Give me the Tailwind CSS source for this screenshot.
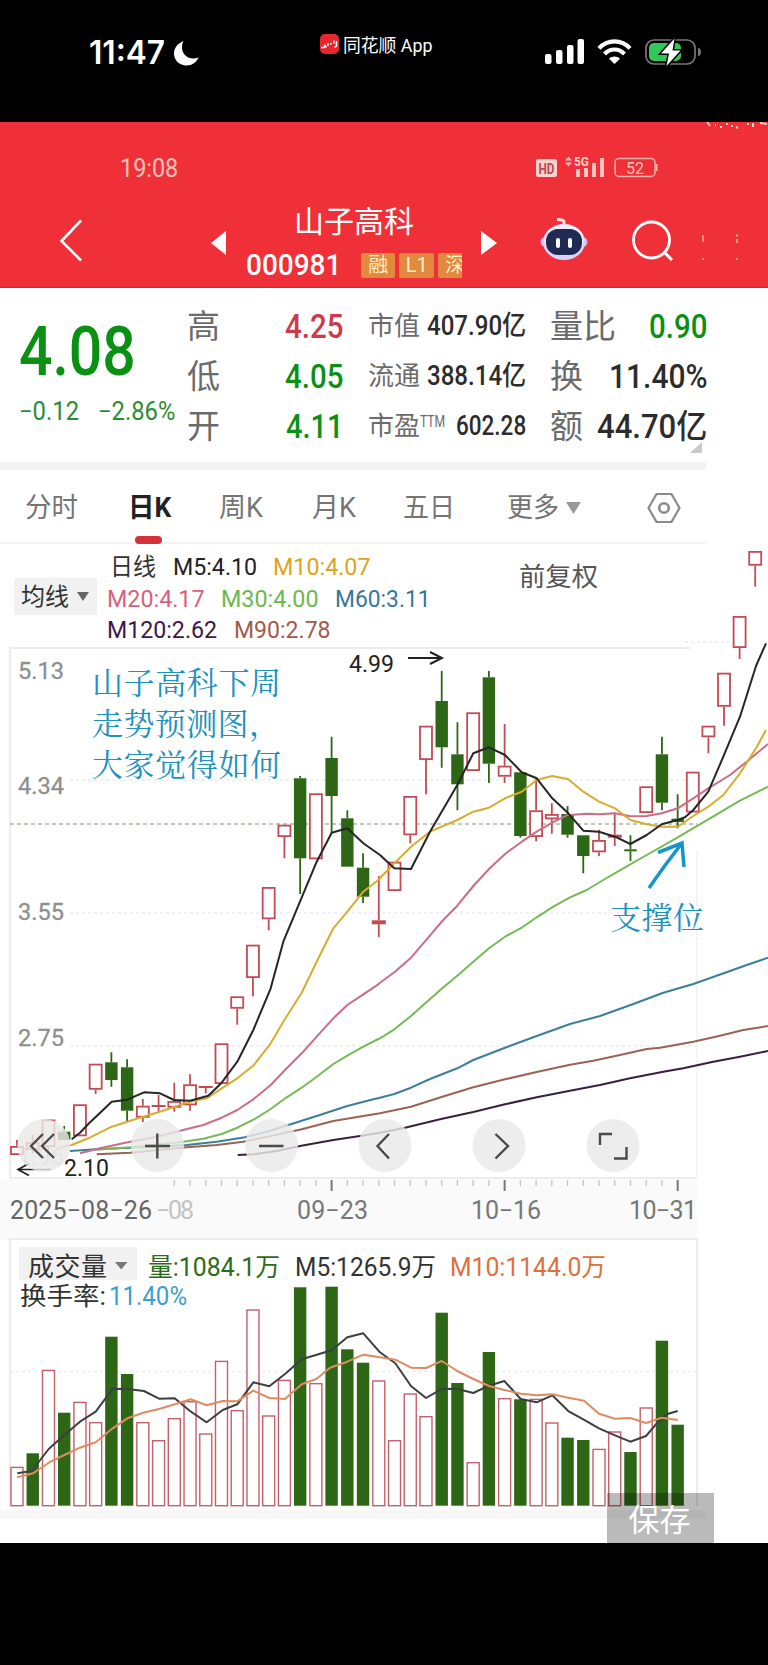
<!DOCTYPE html>
<html lang="zh-CN">
<head>
<meta charset="utf-8">
<title>山子高科 000981</title>
<script src="https://cdn.jsdelivr.net/npm/@tailwindcss/browser@4"></script>
</head>
<body class="w-[768px] h-[1665px] overflow-hidden bg-black font-[Roboto,'Noto_Sans_CJK_SC',sans-serif]">

<!-- phone status bar -->
<header class="h-[122px] flex items-start text-white">
  <div class="flex items-center h-[26px] mt-[40px] ml-[89px] w-[231px]">
    <span data-w="76" class="font-[Inter] font-semibold text-[32px] leading-none whitespace-nowrap">11:47</span>
    <svg class="ml-[9px]" width="25" height="26" viewBox="0 0 25 26"><path fill="#fff" d="M9.5 1C3.8 3.400 0 8 0 13.500 0 20.500 5.600 25.500 12.500 25.500c5.500 0 10-3.200 12-8-1.600.7-3.300 1-5 1C12.800 18.500 8 13.700 8 7.500 8 5 8.500 3 9.500 1z"/></svg>
  </div>
  <div class="flex items-center h-[22px] mt-[33px] w-[225px]">
    <svg width="19" height="20" viewBox="0 0 19 20"><rect width="19" height="20" rx="5" fill="#e8272d"/><path d="M1 13.500h3l1-2 1.500 2M8 9v3M10 10.500l2-1.500M14 6.500v3M16.500 7v5l-2 1.500" stroke="#fff" stroke-width="1.500" fill="none"/></svg>
    <span data-w="89" class="ml-[4px] mt-[3px] text-[18px] leading-none whitespace-nowrap">同花顺 App</span>
  </div>
  <svg class="mt-[36px]" width="160" height="32" viewBox="545 36 160 32">
    <g fill="#fff"><rect x="545" y="54" width="6.500" height="10" rx="2"/><rect x="556" y="50" width="6.500" height="14" rx="2"/><rect x="567" y="45" width="6.500" height="19" rx="2"/><rect x="577.500" y="39" width="6.500" height="25" rx="2"/>
    <path d="M614.500 64l-5.500-5.300c3-2.900 8-2.900 11 0z"/></g>
    <g fill="none" stroke="#fff" stroke-width="4.200"><path d="M599 48.300c8.500-9.300 22.500-9.300 31 0"/><path d="M604.500 54c5.500-6 14.500-6 20 0"/></g>
    <rect x="646" y="40" width="49" height="24" rx="8" fill="none" stroke="#777" stroke-width="1.700"/>
    <path d="M698 47.500q3 1 3 4.500t-3 4.500z" fill="#777"/>
    <rect x="649" y="43" width="32" height="18" rx="5" fill="#33c759"/>
    <path d="M674.500 38.500l-13.500 15h8l-2.500 12.500 14-15.500h-8z" fill="#fff" stroke="#000" stroke-width="3" paint-order="stroke"/>
  </svg>
</header>

<main class="relative w-[768px] h-[1421px] bg-white">
  <!-- red title area -->
  <section class="h-[166px] bg-[#f03038] border-b border-[#b8343a] relative">
    <div class="flex items-start h-[60px] pl-[120px] text-[#ffc3bd]">
      <span data-w="58" class="text-[25px] leading-none mt-[34px]">19:08</span>
      <svg class="ml-[358px] mt-[33px]" width="124" height="24" viewBox="536 155 124 24">
        <rect x="536" y="159" width="21" height="18" rx="2" fill="#ffd3cb"/>
        <text x="538.500" y="174" font-size="15" font-weight="700" textLength="16" lengthAdjust="spacingAndGlyphs" fill="#b84a50">HD</text>
        <path d="M565 160.500l3.500-4 3.500 4zM565 162.500l3.500 4 3.500-4z" fill="#ffc3bd"/>
        <text x="574" y="166" font-size="13" font-weight="700" textLength="15" lengthAdjust="spacingAndGlyphs" fill="#ffd3cb">5G</text>
        <path d="M576 169h4v8h-4zM584 168h4v9h-4zM592 163h4v14h-4zM600 158h4v19h-4z" fill="#ffc3bd"/>
        <rect x="615" y="158.500" width="40" height="18" rx="4" fill="none" stroke="#ffb0a8" stroke-width="1.500"/><path d="M656.500 164v7" stroke="#ffb0a8" stroke-width="2"/>
        <text x="626" y="173.500" font-size="16" textLength="18" fill="#ffc3bd">52</text>
      </svg>
    </div>
    <div class="flex mt-[16px] h-[80px]">
      <svg class="ml-[58px] mt-[20px]" width="28" height="46" viewBox="58 217 28 46"><path d="M81 219.500L61.500 240 81 259.500" fill="none" stroke="#fff" stroke-width="2.600"/></svg>
      <svg class="ml-[125px] mt-[33px]" width="15" height="24" viewBox="0 0 15 24"><path d="M15 0v24L0 12z" fill="#fff"/></svg>
      <div class="ml-[20px] w-[235px] text-white">
        <div class="h-[42px] pt-[9px] pl-[48px] leading-none text-[30px] whitespace-nowrap flex"><span data-w="120">山子高科</span></div>
        <div class="flex items-center h-[32px] mt-[9px]">
          <span data-w="95" class="text-[30px] leading-none font-medium">000981</span>
          <div class="ml-[20px] w-[101px] shrink-0 overflow-hidden flex gap-[4px] text-[20px] leading-[25px] text-[#fff0c8] text-center">
            <span class="w-[34px] h-[25px] bg-[#e2893f] shrink-0 rounded-xs">融</span>
            <span class="w-[35px] h-[25px] bg-[#e2893f] shrink-0 rounded-xs">L1</span>
            <span class="w-[34px] h-[25px] bg-[#e2893f] shrink-0 rounded-xs">深</span>
          </div>
        </div>
      </div>
      <svg class="mt-[33px]" width="16" height="24" viewBox="0 0 16 24"><path d="M0 0v24l16-12z" fill="#fff"/></svg>
      <svg class="ml-[41px] mt-[17px]" width="52" height="46" viewBox="538 215 52 46">
        <path d="M564 226v-4.500q0-2-7-2" stroke="#ffe0e0" stroke-width="3" fill="none"/>
        <circle cx="545.500" cy="242" r="5" fill="#c8c0f4"/><circle cx="582.500" cy="242" r="5" fill="#c8c0f4"/>
        <ellipse cx="564" cy="242" rx="21" ry="18" fill="#d9d2fa"/><ellipse cx="564" cy="240" rx="19.500" ry="15.500" fill="#f2effd"/>
        <rect x="546" y="229" width="36" height="26" rx="12" fill="#1f2b52"/><rect x="556" y="238" width="4" height="10" rx="2" fill="#fff"/><rect x="568" y="238" width="4" height="10" rx="2" fill="#fff"/>
      </svg>
      <svg class="ml-[40px] mt-[20px]" width="48" height="46" viewBox="630 218 48 46"><circle cx="651.500" cy="240" r="18" fill="none" stroke="#fff" stroke-width="2.800"/><path d="M664 252l8 8" stroke="#fff" stroke-width="3"/></svg>
      <svg class="ml-[22px] mt-[34px]" width="44" height="30" viewBox="700 232 44 30"><path d="M703 235v7M737 234v3M737 239v4M703 258v2M737 258v2" stroke="#ff9a95" stroke-width="1.800"/></svg>
    </div>
    <svg class="absolute right-0 top-0" width="62" height="8" viewBox="706 122 62 8"><path d="M707 122l3 4M715 125h1M720 127h2M726 124h2M731 126h2M736 127l2 1M747 124h2M753 123v4M760 123l7 1" stroke="#ffd5d0" stroke-width="2" fill="none"/></svg>
  </section>

  <!-- quote summary -->
  <section class="flex h-[174px] text-[#6b6b6b] whitespace-nowrap">
    <div class="ml-[19px] w-[168px]">
      <div class="h-[104px] pt-[30px] text-[#0a9012] text-[68px] leading-none font-medium flex"><span data-w="117">4.08</span></div>
      <div class="flex text-[25px] leading-none text-[#2b8c34] mt-[7px]"><span data-w="60">−0.12</span><span data-w="77" class="ml-[19px]">−2.86%</span></div>
    </div>
    <div class="w-[156px] pt-[13px] text-[33px]">
      <div class="h-[50px] flex items-center justify-between leading-none"><span>高</span><span data-w="58" class="text-[#cc3a4c] font-medium">4.25</span></div>
      <div class="h-[50px] flex items-center justify-between leading-none"><span>低</span><span data-w="58" class="text-[#0a9012] font-medium">4.05</span></div>
      <div class="h-[50px] flex items-center justify-between leading-none"><span>开</span><span data-w="57" class="text-[#0a9012] font-medium">4.11</span></div>
    </div>
    <div class="ml-[25px] w-[158px] pt-[13px] text-[26px]">
      <div class="h-[50px] flex items-center justify-between leading-none"><span>市值</span><span data-w="99" class="text-[#2c2c2c] text-[27px] font-medium">407.90亿</span></div>
      <div class="h-[50px] flex items-center justify-between leading-none"><span>流通</span><span data-w="99" class="text-[#2c2c2c] text-[27px] font-medium">388.14亿</span></div>
      <div class="h-[50px] flex items-center justify-between leading-none"><span class="flex items-start">市盈<span data-w="25" class="text-[17px] leading-none">TTM</span></span><span data-w="70" class="text-[#2c2c2c] text-[27px] font-medium">602.28</span></div>
    </div>
    <div class="ml-[24px] w-[157px] pt-[13px] text-[33px]">
      <div class="h-[50px] flex items-center justify-between leading-none"><span>量比</span><span data-w="58" class="text-[#0a9012] font-medium">0.90</span></div>
      <div class="h-[50px] flex items-center justify-between leading-none"><span>换</span><span data-w="99" class="text-[#2c2c2c] font-medium">11.40%</span></div>
      <div class="h-[50px] flex items-center justify-between leading-none"><span>额</span><span data-w="110" class="text-[#2c2c2c] font-medium">44.70亿</span></div>
      <svg class="ml-[140px] -mt-[9px]" width="12" height="11"><path d="M12 0v11H0z" fill="#c9c9c9"/></svg>
    </div>
  </section>
  <div class="w-[706px] h-[8px] bg-[#f3f3f3]"></div>

  <!-- period tabs -->
  <nav class="w-[706px] h-[74px] border-b-2 border-[#f3f3f3] flex text-[27px] leading-[76px] text-[#757575] whitespace-nowrap">
    <span class="ml-[25px] w-[103px] flex"><span data-w="53">分时</span></span>
    <span class="w-[91px] flex relative text-[#222] font-bold"><span data-w="43">日K</span><i class="absolute left-[7px] top-[66px] w-[27px] h-[8px] rounded-full bg-[#d2323c]"></i></span>
    <span class="w-[93px] flex"><span data-w="44">周K</span></span>
    <span class="w-[91px] flex"><span data-w="44">月K</span></span>
    <span class="w-[104px] flex"><span data-w="52">五日</span></span>
    <span class="w-[59px] flex"><span data-w="52">更多</span></span>
    <svg class="mt-[32px]" width="15" height="12"><path d="M0 0h15L7.500 12z" fill="#999"/></svg>
    <svg class="ml-[66px] mt-[22px]" width="34" height="32" viewBox="647 492 34 32"><path d="M656.500 494h15l8 14-8 14h-15l-8-14z" fill="none" stroke="#8a8a8a" stroke-width="2.200" stroke-linejoin="round"/><circle cx="664" cy="508" r="4.800" fill="none" stroke="#8a8a8a" stroke-width="2.600"/></svg>
  </nav>

  <!-- moving-average legend -->
  <section class="flex h-[104px] whitespace-nowrap text-[24px] leading-none">
    <div class="ml-[14px] mt-[34px] w-[83px] h-[37px] bg-[#f1f1f1] rounded-xs flex items-center text-[#333]"><span class="ml-[7px]" data-w="48">均线</span><svg class="ml-[8px]" width="12" height="9"><path d="M0 0h12L6 9z" fill="#666"/></svg></div>
    <div class="ml-[10px] w-[412px] pt-[7px]">
      <div class="flex items-center h-[32px] pl-[3px]"><span data-w="46" class="text-[#333]">日线</span><span data-w="84" class="ml-[17px] text-[#222]">M5:4.10</span><span data-w="98" class="ml-[16px] text-[#dba520]">M10:4.07</span></div>
      <div class="flex items-center h-[31px]"><span data-w="98" class="text-[#d9607c]">M20:4.17</span><span data-w="98" class="ml-[16px] text-[#6cb84c]">M30:4.00</span><span data-w="96" class="ml-[17px] text-[#377898]">M60:3.11</span></div>
      <div class="flex items-center h-[32px]"><span data-w="110" class="text-[#3c1650]">M120:2.62</span><span data-w="97" class="ml-[17px] text-[#a25a4c]">M90:2.78</span></div>
    </div>
    <span class="text-[26px] mt-[20px] text-[#555]" data-w="79">前复权</span>
  </section>

  <!-- price and volume charts; user units are page pixels -->
  <svg id="chart" class="absolute left-0 top-[421px]" width="768" height="1000" viewBox="0 543 768 1000">
    <rect x="0" y="1180" width="697" height="60" fill="#fafafa"/>
    <g fill="none" stroke="#ececec" stroke-width="2"><path d="M690 648H10V1178H697"/><path d="M697 850V1178" stroke="#f5f5f5"/><path d="M10 1506V1239H697V1506"/></g>
    <rect x="0" y="1510" width="706" height="9" fill="#f7f7f7"/>
    <g fill="none" stroke="#ececec" stroke-width="1.300" stroke-dasharray="3 3"><path d="M70 780H697M70 913H697M70 1046H697M685 642H745M10 1371.500H697"/></g>
    <path d="M10 824H697" stroke="#a9bba4" stroke-width="1.500" stroke-dasharray="4 3"/>
    <g id="ticks"></g>
    <g font-size="24" fill="#8f8f8f" stroke="#8f8f8f" stroke-width=".3">
      <text x="18" y="679" textLength="46" lengthAdjust="spacingAndGlyphs">5.13</text>
      <text x="18" y="793.500" textLength="46" lengthAdjust="spacingAndGlyphs">4.34</text>
      <text x="18" y="920" textLength="46" lengthAdjust="spacingAndGlyphs">3.55</text>
      <text x="18" y="1046" textLength="46" lengthAdjust="spacingAndGlyphs">2.75</text>
      <text x="18" y="1165" textLength="46" lengthAdjust="spacingAndGlyphs" fill="#ccc" stroke="none">1.96</text>
    </g>
    <g font-size="25" fill="#777">
      <text x="10" y="1218.500" textLength="142" fill="#666">2025−08−26</text><text x="156" y="1218.500" textLength="38" fill="#c4c4c4">−08</text>
      <text x="297" y="1218.500" textLength="71">09−23</text><text x="471" y="1218.500" textLength="70">10−16</text><text x="629" y="1218.500" textLength="68">10−31</text>
    </g>
    <g id="candles"></g><g id="lines" fill="none" stroke-width="2" stroke-linejoin="round"></g>
    <g font-size="31" fill="#1c93bd" font-family="'Noto Serif CJK SC','Noto Sans CJK SC',sans-serif">
      <text x="92" y="694" textLength="189">山子高科下周</text><text x="92" y="735" textLength="188">走势预测图，</text><text x="92" y="775.500" textLength="189">大家觉得如何</text>
      <text x="610" y="929" textLength="94">支撑位</text>
    </g>
    <path d="M649 888Q664 866 682 843M658 852.500L682 843L684 867" fill="none" stroke="#1496cc" stroke-width="3.500"/>
    <g font-size="23.500" fill="#222"><text x="349" y="671.500" textLength="45" lengthAdjust="spacingAndGlyphs">4.99</text><text x="64" y="1176" textLength="45" lengthAdjust="spacingAndGlyphs">2.10</text></g>
    <g fill="none" stroke="#222" stroke-width="2"><path d="M408 658H441M430 652L442 658L430 664"/><path d="M51 1169.500H18M29 1163.500L18 1169.500L29 1175.500" stroke-width="1.700"/></g>
    <g fill="#e9e9e9" fill-opacity=".82"><circle cx="44" cy="1145.500" r="26.500"/><circle cx="157.500" cy="1145.500" r="26.500"/><circle cx="271.500" cy="1145.500" r="26.500"/><circle cx="385" cy="1145.500" r="26.500"/><circle cx="499" cy="1145.500" r="26.500"/><circle cx="613" cy="1145.500" r="26.500"/></g>
    <g fill="none" stroke="#4a4a4a" stroke-width="2.400"><path d="M43 1134L31 1146L43 1158M54 1134L42 1146L54 1158"/><path d="M145 1146H170M157.300 1133.500V1158.500M259 1146H283.500"/><path d="M389 1134L377.500 1146L389 1158.500"/><path d="M495.500 1134L508 1146L495.500 1158.500"/><path d="M600 1145V1134H612M626.500 1147V1158.500H614"/></g>
    <rect x="19" y="1247" width="118" height="33" fill="#f1f1f1"/><path d="M115 1262H127.500L121.200 1269.500z" fill="#777"/>
    <g font-size="25">
      <text x="28" y="1276" textLength="79" font-size="26" fill="#333">成交量</text>
      <text x="148" y="1275.500" textLength="132" lengthAdjust="spacingAndGlyphs" fill="#2d6b18">量:1084.1万</text>
      <text x="295" y="1275.500" textLength="141" lengthAdjust="spacingAndGlyphs" fill="#333">M5:1265.9万</text>
      <text x="450" y="1275.500" textLength="156" lengthAdjust="spacingAndGlyphs" fill="#e0703e">M10:1144.0万</text>
      <text x="20" y="1304.500" textLength="86" lengthAdjust="spacingAndGlyphs" fill="#333">换手率:</text>
      <text x="109" y="1304.500" textLength="78" lengthAdjust="spacingAndGlyphs" fill="#3a9fcc">11.40%</text>
    </g>
  </svg>
  <button class="absolute left-[607px] top-[1371px] w-[107px] h-[53px] bg-black/27 text-white text-[31px] leading-[56px] text-center pr-[2px]">保存</button>
</main>

<script>
// Squeeze or stretch each label to its column width, again whenever its natural size changes.
const fit = e => {
  const n = e.offsetWidth, w = +e.dataset.w;
  if (!n) return;
  e.style.transform = `scaleX(${w / n})`;
  e.style.marginRight = (w - n) + 'px';
};
const labels = [...document.querySelectorAll('[data-w]')];
const watcher = new ResizeObserver(list => list.forEach(x => fit(x.target)));
labels.forEach(e => {
  Object.assign(e.style, { display: 'inline-block', flexShrink: 0, whiteSpace: 'nowrap', transformOrigin: '0 50%' });
  watcher.observe(e);
});
window.addEventListener('load', () => labels.forEach(fit));
const cx = i => 17 + 15.73 * i;
const G = '#2d6614', R = '#c44a54';
// [kind, high, body top, body bottom, low]
const K = [['r',1140,1146,1155,1155],['r',1135,1142,1150,1153],['r',1119,1119.500,1147,1150],['g',1126,1131.700,1140,1140],['r',1104,1104.300,1136.300,1136],['r',1064,1063.700,1089.700,1094],['g',1052.300,1062.300,1080,1086.700],['g',1059.300,1067.300,1110.700,1121.700],['r',1099,1105.700,1117.700,1122],['r',1095,1105,1106.300,1111.700],['r',1082.700,1101,1107.700,1111.700],['r',1074.300,1084.300,1105.300,1110.700],['r',1086,1086,1087.300,1093.300],['r',1044,1043.300,1084,1084],['r',997,996.300,1008.700,1024.700],['r',945,944.700,978,996.300],['r',887,887,919.300,930.300],['r',825,824.700,837,858.300],['g',776,778.300,858.300,894],['r',794,793.300,859.300,859],['g',736.700,758,796,832.700],['g',810.300,818.300,866.700,866.700],['g',853.300,867.700,896.700,903],['r',876,920.300,924.300,937.300],['r',862,861.700,891,891],['r',796,796,835.300,843.300],['r',726,725.700,760,794.300],['g',671,701,747.300,767.700],['g',722.300,754.300,784.300,810.300],['r',713,712.300,771,771],['g',671,677.300,763.700,783],['r',724,765.700,776.700,783],['g',772.300,772.300,836,837.700],['r',777.300,810.300,837,841.300],['r',803.300,814,819.300,833.700],['g',806,814,834.700,837.700],['g',835.300,835.300,856,873.300],['r',829.700,840,852.300,856],['r',812.700,834.700,837.700,846],['g',835.300,849.300,851.300,861],['r',787,786.300,813,813],['g',736.700,754.300,802.700,810.300],['g',794.300,818.700,822,828.300],['r',772,771.700,812.500,812],['r',726,725.700,737.300,753.300],['r',673,672.700,706.700,725.700],['r',616,616,648,659],['r',551,551,565.700,586.700]];
let s = '';
K.forEach(([k, h, t, b, l], i) => {
  const x = i > 42 ? 677.200 + 15.600 * (i - 42) : cx(i), c = k == 'g' ? G : R;
  s += `<path d="M${x} ${h}V${Math.max(h, t)}M${x} ${b}V${Math.max(b, l)}" stroke="${c}" stroke-width="1.8"/>`;
  s += k == 'g' ? `<rect x="${x-6.2}" y="${t}" width="12.4" height="${b-t}" fill="${G}"/>`
     : b - t < 5 ? `<rect x="${x-7}" y="${t}" width="14" height="${Math.max(2, b-t)}" fill="${c}"/>`
     : `<rect x="${x-6}" y="${t+.9}" width="12" height="${b-t-1.8}" fill="#fff" stroke="${c}" stroke-width="1.8"/>`;
});
const V = 'r1466.7 g1453.3 r1369.7 g1412.7 r1401.7 r1422 g1336.7 g1374 r1422 r1440 r1418 r1401 r1433.3 r1360.7 r1410 r1309.3 r1415.3 r1379.7 g1287.3 r1383 g1286.7 g1349.3 g1362.7 r1380.3 r1440 r1393.3 r1416 g1312.7 g1383 r1462 g1352 r1398 g1399.3 r1398.7 r1422.3 g1437.7 g1440 r1448.7 r1431.3 g1452 r1407.3 g1340.7 g1424.7';
V.split(' ').forEach((v, i) => {
  const x = cx(i), t = +v.slice(1), h = 1505.700 - t;
  s += v[0] == 'g' ? `<rect x="${x-6.2}" y="${t}" width="12.4" height="${h}" fill="${G}"/>`
     : `<rect x="${x-6}" y="${t+.7}" width="12" height="${h-.7}" fill="#fff" stroke="#c4606a" stroke-width="1.4"/>`;
});
document.getElementById('candles').innerHTML = s;
s = '';
for (let i = 10; i < 43; i++) {
  const m = i == 20 || i == 31 || i == 42;
  s += `<path d="M${cx(i)} 1180V${m ? 1191 : 1186}" stroke="${m ? '#777' : '#c4c4c4'}" stroke-width="${m ? 2 : 1.3}"/>`;
}
document.getElementById('ticks').innerHTML = s;
// Each line is a list of segments: origin x, origin y, then points in thirds of a pixel.
const L = [
 ['#382040', [0,860,'713,885 760,883 830,873 900,858 1000,840 1080,828'],[380,860,'0,818 75,803 180,778 280,756 375,733 470,712 570,692 660,675 750,655 850,635 910,625 1000,605 1080,590 1164,573']],
 ['#9a6455', [0,860,'290,883 390,878 560,862 650,855 730,845 812,828 905,808 1000,783 1090,768'],[380,860,'0,760 93,740 187,710 280,682 375,658 470,636 570,614 640,602 720,585 800,567 840,563 940,545 1020,527 1090,510 1164,498']],
 ['#3c7f9b', [0,860,'210,873 300,867 470,860 560,855 650,845 735,832 800,815 865,795 950,768 1042,738 1120,718'],[380,860,'0,713 43,702 93,683 150,657 232,625 280,600 375,563 470,528 570,492 660,468 760,432 850,398 940,372 1050,333 1100,315 1164,293']],
 ['#76b957', [0,860,'290,869 390,862 550,845 610,836 665,822 712,803 762,778 812,747 860,712 905,683 950,650 1000,612 1042,587 1090,560 1135,537'],[380,860,'0,535 43,508 93,468 140,426 187,385 232,347 280,305 327,265 375,230 425,203 470,172 520,140 570,112 620,90 670,60 730,25'],[380,540,'800,945 893,892 985,838 1080,782 1164,740']],
 ['#cb6d87', [0,860,'240,880 300,865 390,845 470,830 540,812 610,795 665,773 712,750 760,718 812,675 860,625 905,580 950,530 1000,475 1042,435 1090,403 1135,373'],[380,860,'0,368 43,337 93,293 140,238 187,183 232,137 280,78'],[380,540,'327,987 375,942 425,905 470,875 517,848 560,826 620,821 657,823 705,820 751,829 800,828 845,820 893,805 940,775 985,745 1050,705 1100,665 1164,612']],
 ['#d8ac30', [0,860,'180,862 215,855 265,835 335,800 382,785 430,770 475,757 520,742 570,725 620,715 665,685 712,655 762,615 812,550 850,485 905,398 950,305 1000,205 1042,155 1090,95 1135,60'],[380,540,'43,970 93,920 150,875 232,840 280,815 327,803 375,775 425,755 470,720 517,708 565,718 610,755 657,785 705,805 751,840 800,853 845,860 893,860 940,828 985,800 1030,765 1080,700 1128,625 1158,570']],
 ['#262626', [0,860,'215,838 240,818 265,792 335,725 382,719 432,697 480,700 522,720 570,722 625,707 665,668 712,605 760,510 812,385 850,245 900,125 950,5'],[0,540,'995,878 1042,865 1090,910'],[380,540,'0,945 43,985 93,987 150,875 232,735 280,640 327,622 375,645 425,697 470,715 517,775 565,820 610,872 657,875 705,890 751,912 800,885 845,853 893,840 915,832 940,810 985,755 1030,650 1080,530 1128,378 1158,310']],
 ['#3c3f42', [0,1225,'52,745 95,738 146,672 193,630 240,590 287,560 338,491 382,492 432,498 477,521 524,520 570,558 620,592 668,555 712,538 760,472 808,484 855,447 905,403 950,389 995,376 1042,337 1090,325'],[380,1225,'0,382 46,415 93,483 138,519 187,491 232,492 280,504 327,482 373,468 422,522 470,532 517,511 565,558 610,583 657,610 705,631 751,650 798,633 835,590 860,568 893,558']],
 ['#de8b62', [0,1225,'52,757 100,745 146,713 193,690 240,668 287,652 338,610 382,580 430,563 477,552 524,538 572,523 620,541 668,528 712,529 760,497 808,519 855,522 905,478 950,461 990,428 1042,410 1090,389'],[380,1225,'0,397 46,404 93,428 138,429 185,408 232,438 280,462 327,483 373,495 422,506 470,511 517,508 565,518 612,527 657,566 705,581 751,579 798,594 845,578 893,585']]
];
document.getElementById('lines').innerHTML = L.map(([c, ...seg]) => `<polyline stroke="${c}" points="${seg.map(([ox, oy, p]) => p.split(' ').map(q => { const [x, y] = q.split(','); return (ox + x / 3).toFixed(1) + ',' + (oy + y / 3).toFixed(1); }).join(' ')).join(' ')}"/>`).join('');
</script>
</body>
</html>
